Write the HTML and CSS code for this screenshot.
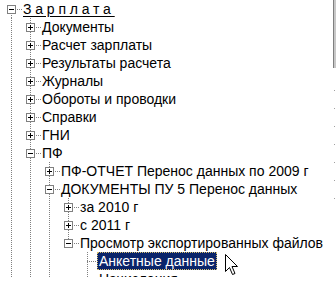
FILE: index.html
```html
<!DOCTYPE html>
<html lang="ru">
<head>
<meta charset="utf-8">
<link rel="stylesheet" href="styles.css">
</head>
<body>
<div class="tree">
  <div class="row"><span class="n first"><b class="box minus"></b></span><span class="t root">Зарплата</span></div>
  <div class="row"><span class="g on"></span><span class="n"><b class="box plus"></b></span><span class="t">Документы</span></div>
  <div class="row"><span class="g on"></span><span class="n"><b class="box plus"></b></span><span class="t">Расчет зарплаты</span></div>
  <div class="row"><span class="g on"></span><span class="n"><b class="box plus"></b></span><span class="t">Результаты расчета</span></div>
  <div class="row"><span class="g on"></span><span class="n"><b class="box plus"></b></span><span class="t">Журналы</span></div>
  <div class="row"><span class="g on"></span><span class="n"><b class="box plus"></b></span><span class="t">Обороты и проводки</span></div>
  <div class="row"><span class="g on"></span><span class="n"><b class="box plus"></b></span><span class="t">Справки</span></div>
  <div class="row"><span class="g on"></span><span class="n"><b class="box plus"></b></span><span class="t">ГНИ</span></div>
  <div class="row"><span class="g on"></span><span class="n"><b class="box minus"></b></span><span class="t">ПФ</span></div>
  <div class="row"><span class="g on"></span><span class="g on"></span><span class="n"><b class="box plus"></b></span><span class="t">ПФ-ОТЧЕТ Перенос данных по 2009 г</span></div>
  <div class="row"><span class="g on"></span><span class="g on"></span><span class="n"><b class="box minus"></b></span><span class="t">ДОКУМЕНТЫ ПУ 5 Перенос данных</span></div>
  <div class="row"><span class="g on"></span><span class="g on"></span><span class="g on"></span><span class="n"><b class="box plus"></b></span><span class="t">за 2010 г</span></div>
  <div class="row"><span class="g on"></span><span class="g on"></span><span class="g on"></span><span class="n"><b class="box plus"></b></span><span class="t">с 2011 г</span></div>
  <div class="row"><span class="g on"></span><span class="g on"></span><span class="g on"></span><span class="n last"><b class="box minus"></b></span><span class="t">Просмотр экспортированных файлов</span></div>
  <div class="row"><span class="g on"></span><span class="g on"></span><span class="g on"></span><span class="g"></span><span class="n"></span><span class="t sel">Анкетные данные</span><svg class="cursor" width="13" height="22" viewBox="0 0 13 22"><path d="M0.5 0.5 L0.5 17.5 L4.5 13.5 L7.5 20.5 L10 19.5 L7 12.5 L12.5 12.5 Z" fill="#fff" stroke="#000" stroke-width="1"/></svg></div>
  <div class="row"><span class="g on"></span><span class="g on"></span><span class="g on"></span><span class="g"></span><span class="n"></span><span class="t">Начисления</span></div>
</div>
<div class="edge"></div>
<div class="edge-dots"></div>
</body>
</html>
```

FILE: styles.css
```css
html, body {
  margin: 0;
  padding: 0;
  background: #fff;
  width: 336px;
  height: 285px;
  overflow: hidden;
}
body {
  position: relative;
  font-family: "Liberation Sans", Arial, sans-serif;
  font-size: 14px;
  color: #000;
}
.tree {
  display: flex;
  flex-direction: column;
  padding-left: 2px;
  height: 277px;
  overflow: hidden;
}
.row {
  display: flex;
  align-items: stretch;
  flex: 0 0 18px;
  height: 18px;
  position: relative;
}
.g, .n {
  flex: 0 0 19px;
  width: 19px;
  height: 18px;
  position: relative;
}
.g.on::before,
.n::before {
  content: "";
  position: absolute;
  left: 9px;
  top: 0;
  width: 1px;
  height: 18px;
  background: repeating-linear-gradient(to bottom, #808080 0 1px, transparent 1px 2px);
}
.n.first::before {
  top: 9px;
  height: 9px;
}
.n.last::before {
  height: 10px;
}
.n::after {
  content: "";
  position: absolute;
  left: 9px;
  top: 9px;
  width: 11px;
  height: 1px;
  background: repeating-linear-gradient(to right, #808080 0 1px, transparent 1px 2px);
}
.box {
  position: absolute;
  left: 5px;
  top: 5px;
  width: 7px;
  height: 7px;
  border: 1px solid #808080;
  background: #fff;
  z-index: 1;
}
.box::before {
  content: "";
  position: absolute;
  left: 1px;
  top: 3px;
  width: 5px;
  height: 1px;
  background: #000;
}
.box.plus::after {
  content: "";
  position: absolute;
  left: 3px;
  top: 1px;
  width: 1px;
  height: 5px;
  background: #000;
}
.t {
  padding: 0 2px;
  line-height: 18px;
  white-space: nowrap;
  position: relative;
}
.root {
  letter-spacing: 3.8px;
  text-decoration: underline;
  text-underline-offset: 2px;
}
.sel {
  background: #0a246a;
  color: #fff;
  outline: 1px dotted #d8c070;
  outline-offset: -1px;
}
.cursor {
  margin-left: 8px;
  margin-top: 2px;
  flex: none;
}
.edge {
  position: absolute;
  right: 0;
  top: 0;
  width: 2px;
  height: 68px;
  background: #c8c8c8;
  border-left: 1px solid #808080;
}
.edge-dots {
  position: absolute;
  right: 1px;
  top: 90px;
  width: 1px;
  height: 126px;
  background: repeating-linear-gradient(to bottom, #a0a0a0 0 1px, transparent 1px 18px);
}
```
